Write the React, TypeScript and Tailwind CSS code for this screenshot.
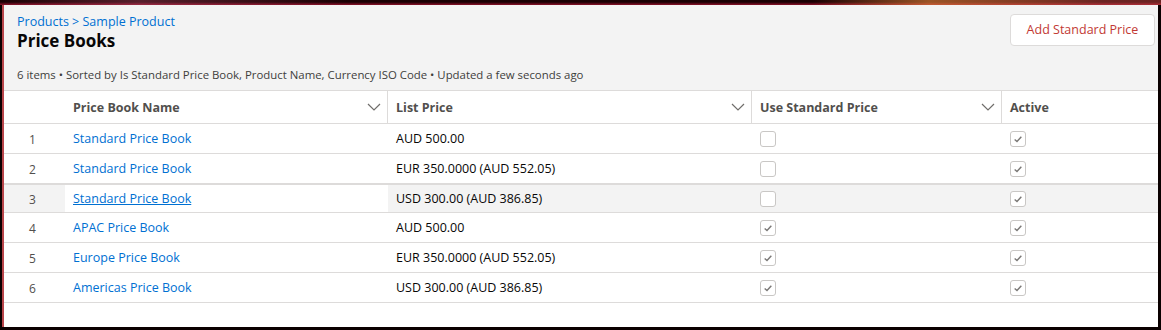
const rows = [
  { n: 1, name: "Standard Price Book", price: "AUD 500.00", std: false, active: true },
  { n: 2, name: "Standard Price Book", price: "EUR 350.0000 (AUD 552.05)", std: false, active: true },
  { n: 3, name: "Standard Price Book", price: "USD 300.00 (AUD 386.85)", std: false, active: true, hover: true },
  { n: 4, name: "APAC Price Book", price: "AUD 500.00", std: true, active: true },
  { n: 5, name: "Europe Price Book", price: "EUR 350.0000 (AUD 552.05)", std: true, active: true },
  { n: 6, name: "Americas Price Book", price: "USD 300.00 (AUD 386.85)", std: true, active: true },
];

const cols = "grid grid-cols-[61px_323px_364px_250px_1fr]";

function Checkbox({ checked }: { checked: boolean }) {
  return (
    <span className="flex h-[16px] w-[16px] items-center justify-center rounded-[3px] border border-[#c9c7c5] bg-white">
      {checked && (
        <svg viewBox="0 0 12 12" className="h-[10px] w-[10px]">
          <polyline points="2,6.5 4.8,9 10,3.2" fill="none" stroke="#7a7876" strokeWidth="1.7" />
        </svg>
      )}
    </span>
  );
}

function Chevron() {
  return (
    <svg viewBox="0 0 14 8" className="h-[8px] w-[14px]">
      <polyline points="1,1 7,7 13,1" fill="none" stroke="#706e6b" strokeWidth="1.2" />
    </svg>
  );
}

function HeaderCell({ label, chevron = true }: { label: string; chevron?: boolean }) {
  return (
    <div className="flex items-center justify-between border-r border-[#dddbda] pl-2 pr-[6px] last:border-r-0">
      <span className="pt-[3px] font-bold text-[#514f4d]">{label}</span>
      {chevron && <Chevron />}
    </div>
  );
}

export default function App() {
  return (
    <div
      className="flex h-[330px] w-[1161px] flex-col overflow-hidden bg-[#0a0000] pb-[3px] text-[12.5px] text-[#080707]"
      style={{ fontFamily: '"Open Sans", "Noto Sans", sans-serif' }}
    >
      <div className="h-[5px] bg-[linear-gradient(180deg,#1a0003_0%,#1a0003_40%,#8a1028_100%)]">
        <div className="h-full w-full bg-[linear-gradient(90deg,transparent_0%,rgba(200,90,120,0.35)_12%,transparent_30%,transparent_70%,rgba(240,140,60,0.6)_80%,rgba(230,90,80,0.4)_95%)]" />
      </div>
      <div className="flex min-h-0 flex-1 pl-[2px] pr-[3px]">
        <div className="flex flex-1 flex-col border-l-2 border-[#b8454a] bg-white">
          <div className="flex h-[85px] flex-col bg-[#f3f3f3] pl-[13px]">
            <div className="flex items-start justify-between">
              <div className="pt-[8px]">
                <div className="leading-[18px] text-[#0070d2]">
                  Products &gt; Sample Product
                </div>
                <h1 className="text-[17px] font-bold leading-[19px]">Price Books</h1>
              </div>
              <button className="mt-[9px] mr-[3px] h-[32px] w-[145px] rounded-[4px] border border-[#dddbda] bg-white text-[12.5px] text-[#c23934]">
                Add Standard Price
              </button>
            </div>
            <div className="mt-[16px] text-[11.4px] text-[#3e3e3c]">
              6 items • Sorted by Is Standard Price Book, Product Name, Currency ISO Code • Updated a few seconds ago
            </div>
          </div>
          <div className={`${cols} h-[34px] border-y border-[#dddbda]`}>
            <div />
            <HeaderCell label="Price Book Name" />
            <HeaderCell label="List Price" />
            <HeaderCell label="Use Standard Price" />
            <HeaderCell label="Active" chevron={false} />
          </div>
          {rows.map((r) => (
            <div
              key={r.n}
              className={`${cols} h-[30px] items-stretch border-b border-[#dddbda] ${r.hover ? "-mt-px border-y-2 bg-[#f3f3f3]" : ""}`}
            >
              <div className="flex items-center justify-center pr-[4px] pt-[2px] text-[12px] text-[#514f4d]">{r.n}</div>
              <div className={`flex items-center pl-2 pt-[2px] ${r.hover ? "bg-white" : ""}`}>
                <a className={`text-[#0070d2] ${r.hover ? "underline" : ""}`}>{r.name}</a>
              </div>
              <div className="flex items-center pl-2 pt-[2px]">{r.price}</div>
              <div className="flex items-center pl-2">
                <Checkbox checked={r.std} />
              </div>
              <div className="flex items-center pl-2">
                <Checkbox checked={r.active} />
              </div>
            </div>
          ))}
        </div>
      </div>
    </div>
  );
}
